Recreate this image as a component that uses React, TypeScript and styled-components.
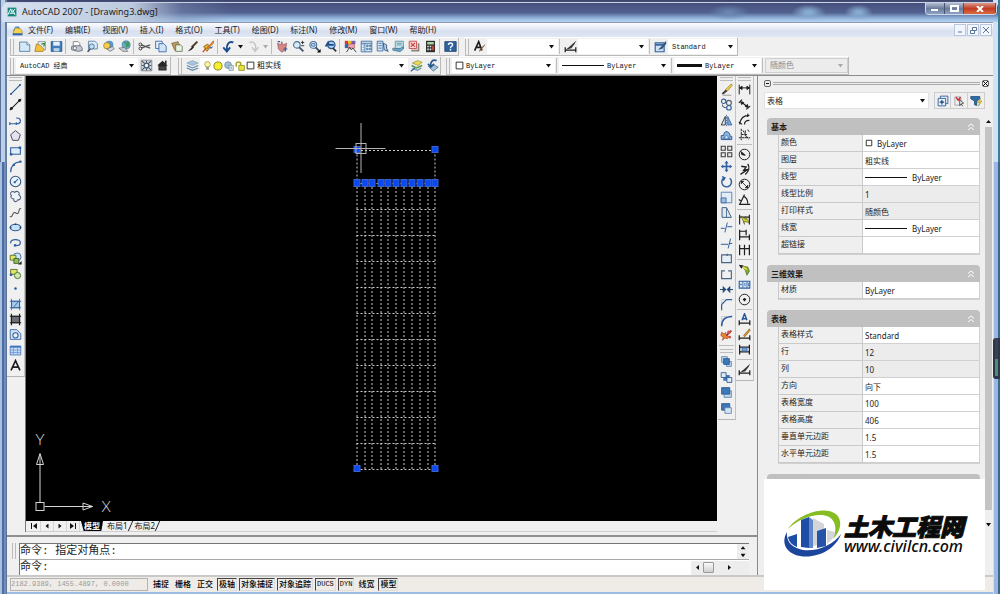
import React from "react";
import styled, { createGlobalStyle, css } from "styled-components";

const sans = `"Noto Sans", "Noto Sans CJK SC", sans-serif`;
const mono = `"Liberation Mono", "Noto Sans CJK SC", monospace`;

const GlobalStyle = createGlobalStyle`
  * { box-sizing: border-box; }
  html, body { margin: 0; height: 100%; }
  body { font-family: ${sans}; font-size: 8px; color: #1c1c1c; background: #8ea6cc; }
  #root { height: 100%; }
  button, input, select { font: inherit; color: inherit; margin: 0; padding: 0; border: 0; background: none; border-radius: 0; }
  button { cursor: pointer; }
  input:focus, select:focus, button:focus { outline: none; }
  ul { list-style: none; margin: 0; padding: 0; }
`;

/* ---------- icons ---------- */

const B = "#2f5f9e";
const K = "#1e1e1e";

const icons: Record<string, React.ReactNode> = {
  acad: (<><rect x="1" y="1" width="14" height="14" fill="#17857a" /><path d="M1 13L6 3l2 6 5-6M4 10h7M9 4l4 9" stroke="#e6fffa" strokeWidth="1.6" fill="none" /></>),
  doc: (<><path d="M1 9l4-7h5l2 4z" fill="#4d8fd6" /><path d="M2 10l3-6 7 1 3 5v4H2z" fill="#f7d34b" stroke="#7c6a2a" strokeWidth=".7" /><path d="M1 15h14v-3H1z" fill="#2e66b0" /></>),
  new: (<><path d="M2 2.500h9l3.500 3.500v8H2z" fill="#d4e8f8" stroke="#49749f" /><path d="M11 2.500V6h3.500" fill="#fff" stroke="#49749f" /></>),
  open: (<><path d="M5 2h9v10H5z" fill="#e9eef5" stroke="#69788a" strokeWidth=".8" /><path d="M1 14l2-9 4 1 6 6-2 2z" fill="#f3c13c" stroke="#8b6919" strokeWidth=".8" /><path d="M9 5l4-1-1 4" stroke="#2c8c3c" strokeWidth="1.500" fill="none" /></>),
  save: (<><path d="M1.500 2h13v12h-13z" fill="#3f7dbb" stroke="#234e80" /><path d="M4 2h8v5H4z" fill="#e8f1f9" /><path d="M4.500 10h7v4h-7z" fill="#b9d3ea" /></>),
  print: (<><path d="M4 8V2h6l2 2v4" fill="#fff" stroke="#666" strokeWidth=".9" /><path d="M2 8l4-1h7l2 3v3l-5 1-8-2z" fill="#c2c8d2" stroke="#4e5664" strokeWidth=".9" /><circle cx="6" cy="10" r="2" fill="#fff" stroke="#555" strokeWidth=".8" /></>),
  preview: (<><path d="M3 1.500h8l3 3V11H3z" fill="#dcecf9" stroke="#56799f" /><circle cx="7" cy="8" r="3.200" fill="#bfe0f4" stroke="#3f5e80" /><path d="M5 11l-3 3.500" stroke="#3a5066" strokeWidth="2" /></>),
  publish: (<><circle cx="9" cy="6" r="5" fill="#5a96cf" /><circle cx="6" cy="7" r="4" fill="#f5cf4c" stroke="#907020" strokeWidth=".8" /><path d="M6 11l7-3 2 3-5 3z" fill="#d5dae2" stroke="#555" strokeWidth=".8" /></>),
  globe: (<><circle cx="10" cy="6" r="5" fill="#69a9d3" stroke="#386d93" strokeWidth=".7" /><path d="M7 3c4 0 5 3 3 6M12 2l1 6" stroke="#3d9a55" strokeWidth="2" fill="none" /><path d="M1 10l7-1 4 5H6z" fill="#c8cdd4" stroke="#555" strokeWidth=".7" /></>),
  cut: (<><path d="M4 6l11 4M4 10l11-4" stroke="#555" strokeWidth="1.400" /><circle cx="3" cy="5.500" r="1.800" fill="none" stroke={K} /><circle cx="3" cy="10.500" r="1.800" fill="none" stroke={K} /></>),
  copy: (<><path d="M2 1.500h8v9H2z" fill="#e4f0fb" stroke={B} /><path d="M6 4.500h6l3 3v7H6z" fill="#cfe4f6" stroke={B} /></>),
  paste: (<><path d="M2 4l8-2 3 8-7 3z" fill="#b59a62" stroke="#6d5a34" strokeWidth=".8" /><path d="M7 6h6l2 2v6H7z" fill="#eaf3e2" stroke="#62734d" /></>),
  brush: (<><path d="M14 2L7 9" stroke="#4b3b2a" strokeWidth="2.400" /><path d="M8 8l-6 6 5-2 3-3z" fill="#252525" /></>),
  block: (<><path d="M2 8l5-3 3 4-4 5z" fill="#e6b530" stroke="#7f5f12" /><path d="M14 1L8 8l-2 1 1 2 7-7z" fill="#e8962e" stroke="#b04a20" strokeWidth=".8" /><path d="M1 15l4-5" stroke="#cf4428" strokeWidth="1.500" /><path d="M9 9l5-1-3 3z" fill="#3d6db0" /></>),
  undo: (<path d="M14 3C8 1 5 6 6 13M1.500 9L6 14l4-5" stroke="#1d4e8c" strokeWidth="2.400" fill="none" />),
  redo: (<path d="M3 3c6-2 9 3 7 10M6 9l4 5 4-5" stroke="#c3c6ca" strokeWidth="1.800" fill="none" />),
  pan: (<><path d="M2 4l4 2 1-4 2 4 4-2-1 8-5 3-4-4z" fill="#d88986" stroke="#8c4a55" strokeWidth=".8" /><path d="M9 11h5M11.500 9v5M2 2h3" stroke={B} strokeWidth="1.300" /></>),
  zoomrt: (<><circle cx="6" cy="6" r="4" fill="#d9ecf9" stroke="#4c6c8c" strokeWidth="1.300" /><path d="M9 9l5 5" stroke="#3f526a" strokeWidth="2.200" /><path d="M11 3h4M13 1v4M11 7h4" stroke={K} /></>),
  zoomwin: (<><circle cx="6.500" cy="6" r="4.200" fill="#d9ecf9" stroke="#4c6c8c" strokeWidth="1.300" /><path d="M9.500 9l4 4.500" stroke="#3f526a" strokeWidth="2.200" /><path d="M4.500 4.500h4v3h-4z" fill="none" stroke={B} /><path d="M15.500 11v4.500H11z" fill="#000" /></>),
  zoomprev: (<><circle cx="9" cy="6" r="4.500" fill="#a9cdec" stroke="#2c568c" strokeWidth="1.500" /><path d="M2 8l3-5 1 3h6" stroke="#1e4a86" strokeWidth="2" fill="none" /><path d="M11 10l4 4" stroke="#333" strokeWidth="2.200" /></>),
  props: (<><path d="M1 1h4v4H1z" fill="#d33" /><path d="M5 1h4v4H5z" fill="#e7c32b" /><path d="M1 5h4v5H1z" fill="#36a" /><path d="M9 1h5v4H9z" fill="#7a5bb5" /><path d="M5 5h8v5H5z" fill="#e9a6b4" stroke="#933" strokeWidth=".6" /><path d="M3 15l4-6 2 3 2-2 4 5" stroke={K} fill="none" /></>),
  dcenter: (<><path d="M1.500 1.500h13v13h-13z" fill="#e7f2fb" stroke={B} /><path d="M1.500 4h13M6 4v10" stroke={B} /><path d="M3 6h2M3 9h2M3 12h2M8 6h2v2H8zM11.500 6h2v2h-2zM8 10h2v2H8zM11.500 10h2v2h-2z" stroke="#3a6d9b" fill="#91bde0" strokeWidth=".8" /></>),
  palette: (<><path d="M1.500 1.500h7v12h-7z" fill="#dbe9f7" stroke={B} /><path d="M3 4h4M3 7h4M3 10h4" stroke={B} /><path d="M9 4l4 2v4l2 4-5-2z" fill="#b8cfe6" stroke="#244a78" /></>),
  sheet: (<><path d="M4 1.500h10v9H4z" fill="#bfe0e6" stroke="#4d7f97" strokeWidth=".9" /><path d="M6 4h6M6 6h6" stroke="#4d7f97" strokeWidth=".8" /><path d="M1 10l8 1 5-3v3l-4 3.500-9-2z" fill="#6fa7c9" stroke="#3b6b8c" strokeWidth=".8" /></>),
  markup: (<><path d="M1.500 1.500h9v9h-9z" fill="#f8d9d9" stroke="#c23a3a" /><path d="M3.500 3.500l5 5M8.500 3.500l-5 5" stroke="#d13a3a" strokeWidth="1.400" /><path d="M4 13h9V4" stroke="#8a7f7b" strokeWidth="2" fill="none" /></>),
  calc: (<><path d="M2.500 1h11v14h-11z" fill="#2c2c2c" /><path d="M4 2.500h8v3H4z" fill="#a7d9a3" /><path d="M4 7h2v2H4zM7 7h2v2H7zM4 10.500h2v2H4zM7 10.500h2v2H7z" fill="#ddd" /><path d="M10 7h2v5.500h-2z" fill="#d84b3c" /></>),
  help: (<><path d="M1 2h14v12H1z" fill="#2f639f" stroke="#1c406e" /><path d="M5.500 6c0-3 5-3 5 0 0 2-2.500 1.500-2.500 4M8 11v1.800" stroke="#fff" strokeWidth="1.700" fill="none" /></>),
  textstyle: (<><path d="M2 13L7 2l4 11M4 9h6" stroke={K} strokeWidth="2" fill="none" /><path d="M14.500 6L10 12l-2 2 1-3z" fill="#a97843" stroke="#553a1c" strokeWidth=".6" /></>),
  dimstyle: (<><path d="M1.500 9v6M14.500 9v6M2 12.500h12" stroke={K} strokeWidth="1.500" /><path d="M15 1l-2 4-4 5-7 2 5-4z" fill="#333" /></>),
  tablestyle: (<><path d="M1.500 3.500h11v11h-11z" fill="#cfe2f5" stroke={B} strokeWidth="1.400" /><path d="M1.500 6h11" stroke={B} strokeWidth="2" /><path d="M15 1L8 9l-3 3 5-1 5-6z" fill="#37597d" /></>),
  gear: (<><path d="M1.500 1.500h13v13h-13z" fill="#d8dde3" stroke="#777" /><circle cx="8" cy="8" r="3" fill="#eef2f6" stroke="#46586c" strokeWidth="1.600" /><path d="M2.500 2.500l3 3M13.500 2.500l-3 3M2.500 13.500l3-3M13.500 13.500l-3-3M8 2v2.500M8 11.500V14M2 8h2.500M11.500 8H14" stroke="#46586c" strokeWidth="1.400" /></>),
  home: (<><path d="M8 2L1.500 8H3v6h10V8h1.500z" fill="#262626" /><path d="M11 2h2v4h-2z" fill="#262626" /><path d="M4 10h8M4 12h8" stroke="#777" strokeWidth=".7" /></>),
  layers: (<><path d="M1 5l7-3 7 3-7 3z" fill="#a9c4dd" stroke="#6d8fb0" strokeWidth=".7" /><path d="M1 8l7 3 7-3M1 11l7 3 7-3" stroke="#5e84ab" strokeWidth="1.400" fill="none" /></>),
  bulb: (<><circle cx="8" cy="6" r="5" fill="#fdf6a4" stroke="#8f8440" strokeWidth="1.200" /><path d="M6 11h4v4H6z" fill="#9b9b9b" stroke="#666" strokeWidth=".6" /></>),
  sun: (<circle cx="8" cy="8" r="6.500" fill="#f5ee2e" stroke="#8a8220" strokeWidth="1.500" />),
  freeze: (<><circle cx="6.500" cy="6.500" r="5.500" fill="#9fbfd2" stroke="#5d7c90" /><path d="M8 7h7v8H8z" fill="#dce6ec" stroke="#6a8496" /><path d="M10 9l3 4M13 9l-3 4" stroke="#8aa" /></>),
  lock: (<><path d="M2 9V4c0-3 7-3 7 0v3" fill="none" stroke="#a9a41f" strokeWidth="2.400" /><path d="M6 7h9v8H6z" fill="#e8e23a" stroke="#8a8420" strokeWidth="1.200" /></>),
  swatch: (<path d="M2 2h12v12H2z" fill="#fff" stroke="#222" strokeWidth="1.600" />),
  layercur: (<><path d="M3 5l6-3 6 2-5 4z" fill="#e8dc55" stroke="#7b7626" strokeWidth=".7" /><path d="M2 8l6 3 7-3" stroke="#5a9a4b" strokeWidth="2" fill="none" /><path d="M3 11l6 3 5-3" stroke="#6b8fae" strokeWidth="1.500" fill="none" /><path d="M1 15l5-4" stroke={B} strokeWidth="1.500" /></>),
  layerprev: (<><path d="M3 9l6-2 6 3-6 5z" fill="#a9c3da" stroke="#45678a" strokeWidth=".9" /><path d="M13 2C8 0 5 4 6 9M2.500 6l3.500 4 4-4" stroke="#27588f" strokeWidth="2" fill="none" /></>),
  line: (<><path d="M2 14L14 2" stroke={B} strokeWidth="1.500" /><circle cx="2.500" cy="13.500" r="1.300" fill={B} /><circle cx="13.500" cy="2.500" r="1.300" fill={B} /></>),
  xline: (<><path d="M1 15L15 1" stroke={K} strokeWidth="1.300" /><circle cx="3" cy="13" r="1.800" /><circle cx="13" cy="3" r="1.800" /></>),
  pline: (<path d="M1 12h9c6 0 5-8-1-7M1 10v3.500M9 10v3.500" stroke={B} strokeWidth="1.500" fill="none" />),
  polygon: (<path d="M8 2l6 5-2.500 7h-7L2 7z" fill="#e4e4ee" stroke="#4c4c60" strokeWidth="1.200" />),
  rect: (<><path d="M2 4.500h12v8H2z" fill="#dcebf6" stroke={B} strokeWidth="1.300" /><path d="M1 11h3v3H1zM12 3h3v3h-3z" fill={B} /></>),
  arc: (<><path d="M2 15C2 8 6 3 14 2" stroke={B} strokeWidth="1.500" fill="none" /><circle cx="6" cy="6" r="1.500" fill={B} /><circle cx="14" cy="2" r="1.500" fill={B} /></>),
  circle: (<><circle cx="8" cy="8" r="6.500" fill="#eaf3fa" stroke="#35567c" strokeWidth="1.300" /><path d="M7 9l4-4" stroke={B} strokeWidth="1.400" /><circle cx="7" cy="9" r="1.400" fill={B} /></>),
  cloud: (<path d="M3 7c-3-3 1-7 4-4 3-3 7 0 5 3 4 2 2 7-1 6-2 4-6 2-5-1-4 0-4-3-3-4z" fill="#eef3f8" stroke="#4c5f7c" strokeWidth="1.300" />),
  spline: (<path d="M1 13c4 2 3-6 6-5s4 3 5-1 1-4 3-4" stroke="#555" strokeWidth="1.300" fill="none" />),
  ellipse: (<><ellipse cx="8" cy="8" rx="6.500" ry="4" fill="#c8e0f2" stroke={B} strokeWidth="1.500" /><path d="M7 3h2v2H7zM1 7h2v2H1zM13 7h2v2h-2z" fill="#1d4272" /></>),
  earc: (<><path d="M2 9C1 3 14 3 14 8c0 3-3 4-6 4" stroke={B} strokeWidth="1.500" fill="none" /><path d="M6 10h3v3H6z" fill={B} /></>),
  insert: (<><circle cx="10" cy="6" r="4.800" fill="#cfe4f5" stroke={B} /><path d="M1.500 4h7v6h-7z" fill="#dfe66b" stroke="#48651d" /><path d="M6 8h6v6H6z" fill="#8fbf5b" stroke="#35561c" /><path d="M15.500 11v4.500H11z" /></>),
  mkblock: (<><path d="M2 3h8v6H2z" fill="#e4e46b" stroke="#48651d" /><circle cx="10.500" cy="10.500" r="3.800" fill="#d4e8b4" stroke="#48752d" strokeWidth="1.200" /><path d="M1 8h3v3H1z" fill={B} /></>),
  point: (<circle cx="8" cy="8" r="1.600" fill={B} />),
  hatch: (<><path d="M3 4h10v8H3z" fill="#a4c8e8" stroke={B} /><path d="M3 1v14M13 1v14M1 4h14M1 12h14M6 11l5-6" stroke={B} /></>),
  gradient: (<><path d="M3 4h10v8H3z" fill="#6a7178" stroke={K} /><path d="M3 1v14M13 1v14M1 4h14M1 12h14" stroke={K} strokeWidth="1.500" /></>),
  region: (<><path d="M1.500 14V2h8l5 5v7z" fill="#cfe2f5" stroke={B} /><circle cx="8" cy="9" r="3.200" fill="#f0f0f0" stroke={B} strokeWidth="1.300" /></>),
  table: (<><path d="M1.500 2.500h13v11h-13z" fill="#c9dff5" stroke="#3e6fc0" /><path d="M1.500 3.500h13" stroke="#3e6fc0" strokeWidth="2" /><path d="M1.500 7.500h13M1.500 10.500h13M5.500 4v9M10.500 4v9" stroke="#6d96d6" /></>),
  mtext: (<path d="M2.500 14L8 2l5.500 12M4.500 10h7" stroke={K} strokeWidth="2" fill="none" />),
  erase: (<><path d="M14 1L7 8l2 2 6-7z" fill="#f2cf3f" stroke="#7f6717" strokeWidth=".7" /><path d="M7 8l-5 5 2 1 5-4z" fill="#414141" /><path d="M3 15h11" stroke="#888" /></>),
  copyobj: (<><circle cx="4.500" cy="4" r="2.700" fill="none" stroke={B} strokeWidth="1.400" /><circle cx="11" cy="6" r="3" fill="none" stroke="#53606f" strokeWidth="1.400" /><circle cx="11" cy="12" r="2.800" fill="none" stroke={B} strokeWidth="1.400" /><path d="M3 8c0 3 2 4 5 4" stroke="#53606f" strokeWidth="1.300" fill="none" /></>),
  mirror: (<><path d="M6.500 3v10.500h-5z" fill="#dfe6ec" stroke={K} /><path d="M9.500 3v10.500h5z" fill="#7ba7d3" stroke={B} /><path d="M8 1v14" stroke={B} strokeDasharray="2 1" /></>),
  offset: (<><path d="M1.500 13h13V9h-2c0-7-8-8-8-1h-3z" fill="#8ab5dd" stroke={B} strokeWidth="1.200" /><path d="M4 12v-1h2c0-4 4-4 4 0h2v1z" fill="#dbe9f6" stroke={B} strokeWidth=".8" /></>),
  array: (<path d="M1.500 1.500h5v5h-5zM9.500 1.500h5v5h-5zM1.500 9.500h5v5h-5zM9.500 9.500h5v5h-5z" fill="#e9e9e9" stroke="#3c3c3c" strokeWidth="1.300" />),
  move: (<path d="M8 1l2.500 3H9v3h3V5.500L15 8l-3 2.500V9H9v3h1.500L8 15l-2.500-3H7V9H4v1.500L1 8l3-2.500V7h3V4H5.500z" fill={B} />),
  rotate: (<path d="M5 3.500A6 6 0 1 0 12 4M2.500 2L6 3.500 4 7" stroke={B} strokeWidth="1.800" fill="none" />),
  scale: (<><path d="M1.500 1.500h13v13h-13z" fill="#e4edf6" stroke="#5c88b8" strokeWidth="1.200" /><path d="M1.500 8.500h6v6h-6z" fill="#9cc0e2" stroke={B} /></>),
  stretch: (<><path d="M2.500 14V2H8l6 12z" fill="#e0e6ec" stroke="#3f6286" strokeWidth="1.200" /><path d="M8 2v12" stroke="#3f6286" /></>),
  trim: (<path d="M1 9h5M9 7h6M9 2L6 14" stroke={B} strokeWidth="1.200" fill="none" />),
  extend: (<path d="M1 9h9M13 2l-3 12M11 8h4" stroke={B} strokeWidth="1.200" fill="none" />),
  breakpt: (<path d="M2 3.500h12v9.500H2zM9 2v3" stroke="#4a6684" strokeWidth="1.400" fill="#e6eef6" />),
  breakln: (<path d="M6 3.500H2v9.500h12V3.500h-4" stroke="#4a6684" strokeWidth="1.400" fill="none" />),
  join: (<path d="M0 8h6M10 8h6M4 5l3 3-3 3zM12 5L9 8l3 3z" stroke="#234b7a" fill="#234b7a" strokeWidth="1.300" />),
  chamfer: (<><path d="M2 15V8l6-6h7" stroke={B} strokeWidth="1.500" fill="none" /><path d="M2 8V2h6" stroke="#999" fill="none" strokeDasharray="1 1" /></>),
  fillet: (<><path d="M2 15c0-8 4-12 13-12" stroke={B} strokeWidth="1.700" fill="none" /><path d="M2 10V3h6" stroke="#999" fill="none" strokeDasharray="1 1" /></>),
  explode: (<><path d="M2 4l3 2 2-2 1 4 3 1-2 3-3-1-3 3 1-4-3-2z" fill="#e8842e" stroke="#b03a20" strokeWidth=".8" /><path d="M8 8l6-6" stroke="#7d2222" strokeWidth="1.800" /><circle cx="11" cy="4" r="2.300" fill="#d2524e" /><circle cx="12" cy="10" r="1.600" fill="#c9524e" /></>),
  front: (<><path d="M2 2h7v7H2zM8 8h6v6H8z" fill="#bfd5ea" stroke="#5c82aa" /><path d="M4.500 4.500h7v7h-7z" fill="#3d78b8" stroke="#24538a" /></>),
  back: (<><path d="M4 5h8v7H4z" fill="#3d78b8" /><path d="M1.500 2h6v6h-6zM8.500 8h6v6h-6z" fill="#dfeaf5" stroke="#24538a" /></>),
  above: (<><path d="M5 6h9v8H5z" fill="#bfd5ea" stroke="#5c82aa" /><path d="M2 2h10v8H2z" fill="#3d78b8" stroke="#24538a" /></>),
  under: (<><path d="M2 2h10v8H2z" fill="#3d78b8" stroke="#24538a" /><path d="M6 7h8v7H6z" fill="#d3e3f2" stroke="#5c82aa" /></>),
  dlin: (<path d="M1.500 2v12M14.500 2v12M2 6h12M2 6l3-2v4zM14 6l-3-2v4z" stroke={K} fill={K} strokeWidth="1.200" />),
  dalign: (<path d="M1 6l4-4M10 14l5-4M3 4l10 8M3.500 4.500l1 3 2-2zM12.500 11.500l-3-1 2-2z" stroke={K} fill={K} strokeWidth="1.400" />),
  darc: (<path d="M2 14C3 6 7 3 14 3M8 14c0-3 2-5 6-5M1 11l4 3M12 1v4" stroke={K} fill="none" strokeWidth="1.400" />),
  dord: (<path d="M4 1v14M1 12h14M4 8h8M9 3v9M12 2l2 3M6 3l7 11" stroke={K} fill="none" strokeDasharray="3 1" strokeWidth="1.200" />),
  drad: (<><circle cx="8" cy="8" r="6.500" fill="none" stroke={K} strokeWidth="1.200" /><path d="M9 9L4 5l1 3z" stroke={K} strokeWidth="1.300" /></>),
  djog: (<path d="M12 1c3 4 1 10-3 13M4 4l6 1-3 4 5-1-9 6" stroke={K} strokeWidth="1.600" fill="none" />),
  ddia: (<><circle cx="8" cy="8" r="6.500" fill="none" stroke={K} strokeWidth="1.200" /><path d="M4 4l8 8M4 4v3l3-3zM12 12V9l-3 3z" stroke={K} fill={K} /></>),
  dang: (<path d="M8 2l-6 12h13M7 4c4 2 5 5 5 9M1 8l3 2" stroke={K} strokeWidth="1.400" fill="none" />),
  dquick: (<><path d="M2 2v12M14 2v12M2 5h12" stroke={K} strokeWidth="1.400" /><path d="M4 4l6 4-1-4 5 8-7-2 1 4z" fill="#d8d52d" stroke="#4c5518" strokeWidth=".8" /></>),
  dbase: (<path d="M2 2v13M10 2v7M2 4h8M2 11h12M14 8v7" stroke={K} strokeWidth="1.500" fill="none" />),
  dcont: (<path d="M2 2v13M8 2v13M14 2v13M2 7h12" stroke={K} strokeWidth="1.500" fill="none" />),
  leader: (<><path d="M1 2l6 1-3 4z" /><path d="M5 4l7 1 2 5-3 5-2-6z" fill="#7fae35" stroke="#3d5c14" strokeWidth=".8" /><path d="M6 5l5 3" stroke="#ecd730" strokeWidth="2" /></>),
  tol: (<><path d="M1.500 4h13v8.500h-13z" fill="#dbe9f7" stroke={B} strokeWidth="1.400" /><path d="M6 4v8M11 4v8" stroke={B} /><circle cx="3.700" cy="8" r="1" fill={B} /><path d="M8.500 6v4M12.800 6v4" stroke={B} fill="none" /></>),
  center: (<><circle cx="8" cy="8" r="6.500" fill="none" stroke={K} strokeWidth="1.200" /><path d="M8 6v4M6 8h4" stroke={K} strokeWidth="1.600" /></>),
  dedit: (<><path d="M5 9l3-8 3 8M6 7h4" stroke="#23579b" strokeWidth="1.800" fill="none" /><path d="M1.500 9v6M14.500 9v6M2 12.500h12" stroke={K} strokeWidth="1.500" /></>),
  dtedit: (<><path d="M14 1L7 9l1 2 7-8z" fill="#e3a338" stroke="#7f4c12" strokeWidth=".8" /><path d="M1.500 9v6M14.500 9v6M2 12.500h12" stroke={K} strokeWidth="1.500" /></>),
  dupdate: (<><path d="M2 2v12M14 2v12M2 5h12M2 11h12" stroke={K} strokeWidth="1.500" /><path d="M5 6h6v4H5z" fill="#7da9d6" stroke={B} /></>),
  pickadd: (<><path d="M4.500 1.500h10v10h-10z" fill="#e8f1fa" stroke={B} strokeWidth="1.200" /><path d="M1.500 4.500h10v10h-10z" fill="#e8f1fa" stroke={B} strokeWidth="1.200" /><path d="M6.500 6.500v6M3.500 9.500h6" stroke="#1e3f70" strokeWidth="1.600" /></>),
  selobj: (<><path d="M2.500 13.500V2.500h8v11z" fill="none" stroke="#8b97a8" /><path d="M4 3l3 4 3-4" stroke="#d2343c" strokeWidth="2" fill="none" /><path d="M9 6v8l2-2 2 3M9 6l5 5h-3" stroke={K} fill="#fff" /></>),
  filter: (<><path d="M1 2h12v3L9 8v6l-3-1V8L1 5z" fill="#2d6ba9" stroke="#1c4776" /><path d="M14 4l-4 6h3l-2 5 5-7h-3z" fill="#f5d630" stroke="#8f7a12" strokeWidth=".6" /></>),
  colorbox: (<path d="M2.500 2.500h11v11h-11z" fill="#fff" stroke="#222" strokeWidth="1.800" />),
};

const Svg = styled.svg<{ $s: number }>`
  display: block;
  flex: none;
  width: ${(p) => p.$s}px;
  height: ${(p) => p.$s}px;
`;

const Icon = ({ name, size = 13 }: { name: string; size?: number }) => (
  <Svg $s={size} viewBox="0 0 16 16" fill="#1e1e1e" aria-hidden="true">{icons[name]}</Svg>
);

const Arrow = styled.span<{ $dir?: "up" | "down" | "left" | "right"; $c?: string }>`
  flex: none;
  width: 5px;
  height: 5px;
  background: ${(p) => p.$c || "#111"};
  pointer-events: none;
  clip-path: ${(p) =>
    p.$dir === "up" ? "polygon(0 80%, 50% 20%, 100% 80%)"
    : p.$dir === "left" ? "polygon(80% 0, 20% 50%, 80% 100%)"
    : p.$dir === "right" ? "polygon(20% 0, 80% 50%, 20% 100%)"
    : "polygon(0 20%, 100% 20%, 50% 90%)"};
`;

/* ---------- window frame ---------- */

const Frame = styled.div`
  position: relative;
  display: flex;
  flex-direction: column;
  min-height: 100%;
  padding: 2px 7px 2px 7px;
  background:
    linear-gradient(90deg, #5d6f96 0 1px, #b9d0ec 1px 5px, #6c7f9f 5px 7px, transparent 7px) 0 0 / 7px 162px no-repeat,
    linear-gradient(90deg, #a9bfdf 0 2px, #4e6da0 2px 4px, #6f8cc0 4px 6px, #5c7396 6px) 0 162px / 7px 100% no-repeat,
    linear-gradient(90deg, #cfe2f8 0 5px, #3f7d94 5px) 100% 0 / 7px 162px no-repeat,
    linear-gradient(90deg, #d0e0f4 0 1px, #9ab6e4 1px 5px, #3c6a84 5px) 100% 162px / 7px 100% no-repeat,
    linear-gradient(#3d446c, #b3cdea 22px, #9dbce4 100%);
`;

const TitleBar = styled.header`
  display: flex;
  align-items: flex-start;
  height: 20px;
  margin: 0 -5px;
  padding: 0 1px 0 5px;
  border-top: 1px solid #c7d2e6;
  border-radius: 5px 5px 0 0;
  background:
    radial-gradient(ellipse 17px 8px at 81% 50%, #86abcf 20%, transparent),
    radial-gradient(ellipse 14px 8px at 86% 50%, #86abcf 20%, transparent),
    radial-gradient(ellipse 20px 8px at 73% 50%, #6b8ab3, transparent),
    linear-gradient(90deg, #d7e2f0 0, #bccadf 130px, #7f91b566 180px, transparent 230px),
    linear-gradient(#47507d, #51618f 50%, #93b4dc 80%, #b7d3f0);
`;

const Title = styled.h1`
  display: flex;
  align-items: center;
  gap: 5px;
  flex: 1;
  height: 18px;
  margin: 0;
  font-size: 9px;
  font-weight: 400;
  line-height: 12px;
`;

const CaptionButtons = styled.div`
  display: flex;
  height: 12px;
  border: 1px solid #cdd8ea;
  border-top: 0;
  border-radius: 0 0 4px 4px;
  overflow: hidden;
`;

const CaptionButton = styled.button<{ $close?: boolean }>`
  display: grid;
  place-items: center;
  width: ${(p) => (p.$close ? 32 : 19)}px;
  border-right: 1px solid #47536f;
  background: ${(p) => (p.$close ? "linear-gradient(#d99a8c, #c23c24 50%, #d96a3f)" : "linear-gradient(#b3bfd3, #6b7c9c 50%, #8ea2c3)")};
`;

const MenuBar = styled.nav`
  display: flex;
  align-items: center;
  height: 15px;
  padding: 0 1px 0 5px;
  border-top: 1px solid #8b9ab4;
  background: linear-gradient(#fdfdff, #d8e0f0 60%, #dfe6f4);
`;

const MenuList = styled.ul`
  display: flex;
  flex: 1;
  gap: 12px;
  padding-left: 5px;
`;

const MenuItem = styled.button`
  line-height: 12px;
  white-space: nowrap;
`;

const MdiButton = styled.button`
  display: grid;
  place-items: center;
  width: 12px;
  height: 12px;
  margin-left: 1px;
  border: 1px solid #b9c6db;
  background: #f1f6fd;
`;

/* ---------- toolbars ---------- */

const ToolRow = styled.div`
  display: flex;
  height: 19px;
  padding-left: 2px;
  background: #f0f0f0;
`;

const ToolBar = styled.div<{ $gap?: number }>`
  display: flex;
  align-items: center;
  height: 18px;
  margin-right: ${(p) => p.$gap ?? 6}px;
  border: solid #fff;
  border-width: 1px 0 0 0;
  box-shadow: 1px 1px 0 #b9b9b9;
`;

const Grip = styled.span<{ $h?: boolean }>`
  flex: none;
  ${(p) => p.$h
    ? css`width: 13px; height: 4px; margin: 1px auto; border-top: 1px solid #bbb; border-bottom: 1px solid #bbb;`
    : css`width: 4px; height: 16px; margin: 0 2px 0 1px; border-left: 1px solid #bbb; border-right: 1px solid #bbb;`}
`;

const ToolButton = styled.button<{ $w?: number }>`
  display: grid;
  place-items: center;
  flex: none;
  width: ${(p) => p.$w || 16}px;
  height: 15px;
`;

const Divider = styled.span<{ $h?: boolean }>`
  flex: none;
  ${(p) => p.$h
    ? css`width: 15px; height: 1px; margin: 2px auto; background: #bdbdbd;`
    : css`width: 1px; height: 15px; margin: 0 2px 0 1px; background: #bdbdbd;`}
`;

const Combo = styled.div<{ $w: number; $off?: boolean }>`
  display: flex;
  align-items: center;
  gap: 1px;
  width: ${(p) => p.$w}px;
  height: 15px;
  padding: 0 4px 0 3px;
  font-family: ${mono};
  background: ${(p) => (p.$off ? "#ececec" : "#fff")};
  border: ${(p) => (p.$off ? "1px solid #cfcfcf" : "0")};
  color: ${(p) => (p.$off ? "#8d8d8d" : "#151515")};
`;

const Pick = styled.select<{ $size: number }>`
  flex: 1;
  min-width: 0;
  height: 13px;
  padding-left: 1px;
  appearance: none;
  font-size: ${(p) => p.$size}px;
  opacity: 1;
`;

const Rule = styled.span<{ $w: number; $t?: number }>`
  flex: none;
  width: ${(p) => p.$w}px;
  height: ${(p) => p.$t || 1}px;
  margin-right: 1px;
  background: #111;
`;

interface SelectProps {
  label: string;
  value: string;
  width: number;
  size?: number;
  disabled?: boolean;
  children?: React.ReactNode;
}

const SelectBox = ({ label, value, width, size = 7, disabled, children }: SelectProps) => (
  <Combo $w={width} $off={disabled}>
    {children}
    <Pick aria-label={label} $size={size} disabled={disabled} defaultValue={value}>
      <option value={value}>{value}</option>
    </Pick>
    <Arrow $c={disabled ? "#aaa" : undefined} />
  </Combo>
);

const Tools = ({ items }: { items: [string, string][] }) => (
  <>
    {items.map(([icon, label]) => (
      <ToolButton key={icon} title={label} aria-label={label}><Icon name={icon} /></ToolButton>
    ))}
  </>
);

/* ---------- work area ---------- */

const Main = styled.main`
  display: flex;
  flex: 1;
  border-top: 1px solid #8c8c8c;
  background: #f0f0f0;
`;

const Left = styled.div`
  display: flex;
  flex-direction: column;
  flex: 1;
  min-width: 0;
  border-right: 1px solid #8a8a8a;
`;

const Work = styled.div`
  display: flex;
  flex: 1;
  align-items: flex-start;
  padding-right: 3px;
  border-bottom: 2px solid #8f8f8f;
`;

const SideBar = styled.div`
  display: flex;
  flex-direction: column;
  width: 18px;
  padding-bottom: 3px;
  border-right: 1px solid #c2c2c2;
  border-bottom: 1px solid #b5b5b5;
`;

const Stack = styled.div<{ $h: number }>`
  display: flex;
  flex-direction: column;
  align-items: center;
  justify-content: space-between;
  height: ${(p) => p.$h}px;
`;

const CanvasColumn = styled.div`
  display: flex;
  flex-direction: column;
  align-self: stretch;
  flex: 1;
  min-width: 0;
  margin: 0 1px 3px 0;
  border-left: 1px solid #777;
`;

const Canvas = styled.div`
  flex: 1;
  min-height: 0;
  background: #000;
  overflow: hidden;
`;

const Drawing = styled.svg`
  display: block;
  width: 100%;
  height: 444px;
`;

const TabStrip = styled.div`
  display: flex;
  align-items: center;
  height: 11px;
  padding-left: 2px;
  border-bottom: 1px solid #cfcfcf;
`;

const NavButton = styled.button`
  display: grid;
  place-items: center;
  width: 13px;
  height: 10px;
  border-right: 1px solid #d4d4d4;
`;

const LayoutTab = styled.button<{ $on?: boolean }>`
  position: relative;
  height: 10px;
  margin-left: 1px;
  padding: 0 3px;
  font-size: 8px;
  line-height: 10px;
  font-weight: ${(p) => (p.$on ? 700 : 400)};
  color: ${(p) => (p.$on ? "#fff" : "#111")};
  white-space: nowrap;
  background: ${(p) => (p.$on ? "#000" : "transparent")};
  clip-path: ${(p) => (p.$on ? "polygon(0 0, 100% 0, 92% 100%, 12% 100%)" : "none")};
  &::after {
    content: "";
    position: absolute;
    right: 0;
    top: 0;
    width: 1px;
    height: 10px;
    background: #222;
    transform: skewX(-24deg);
  }
`;

/* ---------- command window ---------- */

const CommandDock = styled.section`
  display: flex;
  height: 38px;
  padding: 6px 8px 0 4px;
`;

const CommandBox = styled.div`
  display: flex;
  flex-direction: column;
  flex: 1;
  margin-left: 1px;
  border-top: 1px solid #777;
  border-left: 1px solid #777;
  background: #fff;
  font-family: ${mono};
  font-size: 11px;
`;

const CommandLine = styled.div<{ $log?: boolean }>`
  display: flex;
  height: 16px;
  align-items: center;
  line-height: 15px;
  ${(p) => p.$log && css`border-bottom: 1px solid #aaa;`}
`;

const CommandText = styled.output`
  flex: 1;
`;

const CommandInput = styled.input`
  flex: 1;
  min-width: 0;
  height: 12px;
`;

const ScrollV = styled.div`
  display: flex;
  flex-direction: column;
  align-items: center;
  justify-content: space-around;
  width: 12px;
  height: 15px;
  background: #ededed;
`;

const ScrollH = styled.div`
  display: flex;
  align-items: center;
  justify-content: space-between;
  width: 58px;
  height: 14px;
  padding: 0 17px 0 4px;
  background: #ededed;
`;

const Thumb = styled.span`
  width: 11px;
  height: 11px;
  margin-right: 10px;
  border: 1px solid #999;
  border-radius: 1px;
  background: linear-gradient(#fafafa, #cfcfcf);
`;

/* ---------- status bar ---------- */

const StatusBar = styled.footer`
  display: flex;
  align-items: center;
  height: 17px;
  padding: 1px 3px;
  border-top: 2px solid #c9c9c9;
  background: #efece8;
  font-family: ${mono};
`;

const Coords = styled.output`
  width: 138px;
  height: 13px;
  margin-right: 1px;
  border: 1px solid #b3b3b3;
  font-size: 7px;
  line-height: 11px;
  color: #9a9a9a;
  white-space: nowrap;
`;

const Toggle = styled.button<{ $on?: boolean; $latin?: boolean }>`
  height: 13px;
  padding: 0 1px;
  margin-left: 2px;
  border: 1px solid ${(p) => (p.$on ? "#ddd" : "transparent")};
  ${(p) => p.$on && css`border-top-color: #444; border-left-color: #444;`}
  font-size: ${(p) => (p.$latin ? 7 : 8)}px;
  font-weight: 500;
  line-height: 11px;
  color: #000;
`;

/* ---------- properties palette ---------- */

const Palette = styled.aside`
  display: flex;
  flex-direction: column;
  width: 235px;
  padding: 4px 0 0 6px;
  background: #efefef;
`;

const PaletteTop = styled.div`
  display: flex;
  align-items: center;
  gap: 2px;
  height: 7px;
  padding-right: 4px;
`;

const PaletteGrip = styled.span`
  flex: 1;
  height: 3px;
  border-top: 1px solid #aaa;
  border-bottom: 1px solid #aaa;
`;

const TinyButton = styled.button`
  display: grid;
  place-items: center;
  width: 7px;
  height: 7px;
  border: 1px solid #666;
  border-radius: 2px;
`;

const PalettePick = styled.div`
  display: flex;
  align-items: center;
  margin: 5px 8px 9px 0;
`;

const ObjectSelect = styled.div`
  display: flex;
  align-items: center;
  flex: 1;
  height: 17px;
  margin-right: 5px;
  padding: 0 3px 0 1px;
  background: #fff;
  border: 1px solid #e2e2e2;
`;

const BoxButton = styled.button`
  display: grid;
  place-items: center;
  width: 17px;
  height: 17px;
  border: 1px solid #cdcdcd;
  border-left-width: 0;
  &:first-of-type { border-left-width: 1px; }
`;

const PaletteBody = styled.div`
  display: flex;
  flex: 1;
`;

const Sections = styled.div`
  flex: 1;
  padding: 0 5px 0 3px;
`;

const Section = styled.section`
  margin-bottom: 10px;
`;

const SectionHead = styled.h2`
  display: flex;
  align-items: center;
  justify-content: space-between;
  height: 17px;
  margin: 0;
  padding: 0 5px 0 4px;
  border-radius: 4px 4px 0 0;
  background: #c0c0c0;
  font-size: 8px;
  font-weight: 700;
  line-height: 12px;
`;

const Grid = styled.table`
  width: 202px;
  margin-left: 11px;
  border-collapse: separate;
  border-spacing: 0;
  table-layout: fixed;
  border-bottom: 1px solid #d0d0d0;
`;

const NameCell = styled.th`
  width: 85px;
  height: 17px;
  padding: 0 0 2px 2px;
  border: solid #cacaca;
  border-width: 0 1px 1px 1px;
  text-align: left;
  font-weight: 400;
  line-height: 12px;
`;

const ValueCell = styled.td<{ $ro?: boolean }>`
  height: 17px;
  padding: 0 0 0 2px;
  border: solid #d0d0d0;
  border-width: 0 1px 1px 0;
  background: ${(p) => (p.$ro ? "#ececec" : "#fff")};
`;

const ValueFlow = styled.div`
  display: flex;
  align-items: center;
  gap: 4px;
`;

const ValueInput = styled.input`
  flex: 1;
  min-width: 0;
  height: 12px;
`;

const ScrollTrack = styled.div`
  display: flex;
  flex-direction: column;
  align-items: center;
  gap: 3px;
  width: 7px;
  margin-right: 1px;
  padding: 1px 0 48px;
`;

const ScrollThumb = styled.span`
  flex: 1;
  width: 7px;
  margin-bottom: 9px;
  background: #c4c4c4;
`;

/* ---------- floating overlays ---------- */

const Watermark = styled.div`
  position: absolute;
  right: 15px;
  bottom: 4px;
  display: flex;
  align-items: center;
  gap: 1px;
  width: 221px;
  height: 111px;
  padding: 0 0 1px 19px;
  background: #fff;
`;

const WatermarkText = styled.div`
  display: flex;
  flex-direction: column;
  color: #0b0b0b;
  font-style: italic;
  white-space: nowrap;
`;

const SiteName = styled.strong`
  font-family: "Noto Sans CJK SC", sans-serif;
  font-size: 24px;
  font-weight: 900;
  line-height: 24px;
  -webkit-text-stroke: 1px #0b0b0b;
`;

const SiteLink = styled.a`
  color: #0b0b0b;
  font-size: 16px;
  font-weight: 500;
  line-height: 16px;
  text-decoration: none;
`;

const SideWidget = styled.div`
  position: absolute;
  right: 0;
  top: 338px;
  width: 7px;
  height: 41px;
  border-radius: 3px 0 0 3px;
  background: linear-gradient(90deg, #2f3548 2px, transparent 2px 5px, #2f3548 5px), linear-gradient(#394158 0 50%, #4f8b76 50% 92%, #2f3548 92%);
`;

/* ---------- data ---------- */

const menus = ["文件(F)", "编辑(E)", "视图(V)", "插入(I)", "格式(O)", "工具(T)", "绘图(D)", "标注(N)", "修改(M)", "窗口(W)", "帮助(H)"];

const drawTools: [string, string][] = [
  ["line", "直线"], ["xline", "构造线"], ["pline", "多段线"], ["polygon", "正多边形"], ["rect", "矩形"], ["arc", "圆弧"],
  ["circle", "圆"], ["cloud", "修订云线"], ["spline", "样条曲线"], ["ellipse", "椭圆"], ["earc", "椭圆弧"], ["insert", "插入块"],
  ["mkblock", "创建块"], ["point", "点"], ["hatch", "图案填充"], ["gradient", "渐变色"], ["region", "面域"], ["table", "表格"], ["mtext", "多行文字"],
];

const modifyTools: [string, string][] = [
  ["erase", "删除"], ["copyobj", "复制"], ["mirror", "镜像"], ["offset", "偏移"], ["array", "阵列"], ["move", "移动"],
  ["rotate", "旋转"], ["scale", "缩放"], ["stretch", "拉伸"], ["trim", "修剪"], ["extend", "延伸"], ["breakpt", "打断于点"],
  ["breakln", "打断"], ["join", "合并"], ["chamfer", "倒角"], ["fillet", "圆角"], ["explode", "分解"],
];

const orderTools: [string, string][] = [["front", "前置"], ["back", "后置"], ["above", "置于对象之上"], ["under", "置于对象之下"]];

const dimTools: [string, string][][] = [
  [["dlin", "线性"], ["dalign", "对齐"], ["darc", "弧长"], ["dord", "坐标"]],
  [["drad", "半径"], ["djog", "折弯"], ["ddia", "直径"], ["dang", "角度"]],
  [["dquick", "快速标注"], ["dbase", "基线"], ["dcont", "连续"]],
  [["leader", "快速引线"], ["tol", "公差"], ["center", "圆心标记"]],
  [["dedit", "编辑标注"], ["dtedit", "编辑标注文字"], ["dupdate", "标注更新"]],
  [["dimstyle", "标注样式"]],
];

interface Prop { name: string; value: string; ro?: boolean; mark?: "box" | "line"; }

const sections: { title: string; rows: Prop[] }[] = [
  { title: "基本", rows: [
    { name: "颜色", value: "ByLayer", mark: "box" },
    { name: "图层", value: "粗实线" },
    { name: "线型", value: "ByLayer", mark: "line" },
    { name: "线型比例", value: "1", ro: true },
    { name: "打印样式", value: "随颜色", ro: true },
    { name: "线宽", value: "ByLayer", mark: "line" },
    { name: "超链接", value: "" },
  ] },
  { title: "三维效果", rows: [{ name: "材质", value: "ByLayer" }] },
  { title: "表格", rows: [
    { name: "表格样式", value: "Standard" },
    { name: "行", value: "12", ro: true },
    { name: "列", value: "10", ro: true },
    { name: "方向", value: "向下" },
    { name: "表格宽度", value: "100" },
    { name: "表格高度", value: "406" },
    { name: "垂直单元边距", value: "1.5" },
    { name: "水平单元边距", value: "1.5" },
  ] },
  { title: "几何图形", rows: [] },
];

const toggles: [string, boolean][] = [
  ["捕捉", false], ["栅格", false], ["正交", false], ["极轴", true], ["对象捕捉", true],
  ["对象追踪", true], ["DUCS", true], ["DYN", true], ["线宽", false], ["模型", true],
];

const colX = [330.5, 338.5, 345.5, 354.5, 361.5, 369.5, 377.5, 385.5, 393.5, 401.5, 408.5];
const rowY = [107.5, 133.5, 159.5, 185.5, 211.5, 237.5, 263.5, 289.5, 315.5, 341.5, 367.5, 393.5];

/* ---------- parts ---------- */

const CadDrawing = () => (
  <Drawing viewBox="0 0 690 444" preserveAspectRatio="xMidYMid meet" role="img" aria-label="模型空间">
    <g stroke="#c8c8c8" strokeWidth="1" strokeDasharray="2 2" fill="none">
      <path d="M330.500 74.500H408.500M330.500 74.500V107M408.500 74.500V107" />
      {colX.map((x) => <path key={x} d={`M${x} 107V393`} />)}
      {rowY.map((y) => <path key={y} d={`M330 ${y}H409`} />)}
    </g>
    <g fill="#0a48f5" stroke="#3a62c8" strokeWidth="1">
      {colX.map((x) => <rect key={x} x={x - 3} y="103.500" width="6" height="7" />)}
      <rect x="327.500" y="70.500" width="6" height="6" />
      <rect x="405.500" y="70.500" width="6" height="6" />
      <rect x="327.500" y="389.500" width="6" height="6" />
      <rect x="405.500" y="389.500" width="6" height="6" />
    </g>
    <g stroke="#b4b4b4" fill="none">
      <path d="M309 72.500H359M334.500 47V97" />
      <rect x="329.500" y="67.500" width="10" height="10" />
    </g>
    <g stroke="#d5d5d5" fill="none">
      <rect x="9.500" y="426.500" width="8" height="8" />
      <path d="M13.500 426V378M18 430.500H66M13.500 377.500L10 388.500h7zM66 430.500L56.500 427v7z" />
    </g>
    <g fill="#e0e0e0" fontFamily="Lato, sans-serif" fontWeight="300" fontSize="15">
      <text x="9" y="369">Y</text>
      <text x="75" y="436">X</text>
    </g>
  </Drawing>
);

const Chevrons = () => (
  <Svg $s={8} viewBox="0 0 8 8" aria-hidden="true">
    <path d="M1 3.500L4 1l3 2.500M1 7l3-2.500L7 7" stroke="#fff" fill="none" />
  </Svg>
);

const CivilLogo = () => (
  <svg width="60" height="48" viewBox="0 0 60 48" aria-hidden="true">
    <path d="M5 19C14 5 42-6 54 5c6 7 3 17-4 24C54 19 53 11 46 7 36 2 18 7 5 19z" fill="#86bd22" />
    <path d="M4 22C-2 32 2 43 17 46c17 3 36-7 41-22-8 11-24 18-38 16C9 38 3 32 4 22z" fill="#1c459c" />
    <path d="M5 27l9-3v13c-5-2-8-5-9-10z" fill="#1d4da6" />
    <path d="M18 10l8-3v31l-8-1z" fill="#1d4da6" />
    <path d="M26 7l4 3v28h-4z" fill="#5f86c6" />
    <path d="M30 8l11 6v7l-7 4v10l-4 1z" fill="#d3d5d9" />
    <path d="M34 21l9-3v18l-9 2z" fill="#2453a8" />
    <path d="M44 20l8 2c0 4-3 8-8 12z" fill="#d3d5d9" />
  </svg>
);

const PropertyRow = ({ p }: { p: Prop }) => (
  <tr>
    <NameCell scope="row">{p.name}</NameCell>
    <ValueCell $ro={p.ro}>
      <ValueFlow>
        {p.mark === "box" && <Icon name="colorbox" size={8} />}
        {p.mark === "line" && <Rule $w={42} />}
        <ValueInput aria-label={p.name} defaultValue={p.value} readOnly={p.ro} />
      </ValueFlow>
    </ValueCell>
  </tr>
);

export default function App() {
  return (
    <>
      <GlobalStyle />
      <Frame>
        <TitleBar>
          <Title><Icon name="acad" size={10} />AutoCAD 2007 - [Drawing3.dwg]</Title>
          <CaptionButtons>
            <CaptionButton aria-label="最小化"><svg width="8" height="6"><path d="M0 4h7" stroke="#fff" strokeWidth="2" /></svg></CaptionButton>
            <CaptionButton aria-label="最大化"><svg width="9" height="7"><path d="M1 1h7v5H1z" fill="none" stroke="#fff" strokeWidth="2" /></svg></CaptionButton>
            <CaptionButton $close aria-label="关闭"><svg width="8" height="6"><path d="M1 0l6 6M7 0L1 6" stroke="#fff" strokeWidth="2" /></svg></CaptionButton>
          </CaptionButtons>
        </TitleBar>
        <MenuBar>
          <Icon name="doc" size={11} />
          <MenuList>
            {menus.map((m) => <li key={m}><MenuItem>{m}</MenuItem></li>)}
          </MenuList>
          <MdiButton aria-label="最小化文档"><svg width="6" height="6"><path d="M1 5h4" stroke="#5b7598" /></svg></MdiButton>
          <MdiButton aria-label="还原文档"><svg width="7" height="7"><path d="M2.500 .5h4v3h-4zM.5 3.500h4v3h-4z" fill="#fff" stroke="#5b7598" /></svg></MdiButton>
          <MdiButton aria-label="关闭文档"><svg width="6" height="6"><path d="M0 0l6 6M6 0L0 6" stroke="#5b7598" strokeWidth="1" /></svg></MdiButton>
        </MenuBar>

        <ToolRow>
          <ToolBar>
            <Grip />
            <Tools items={[["new", "新建"], ["open", "打开"], ["save", "保存"]]} />
            <Divider />
            <Tools items={[["print", "打印"], ["preview", "打印预览"], ["publish", "发布"], ["globe", "三维 DWF"]]} />
            <Divider />
            <Tools items={[["cut", "剪切"], ["copy", "复制"], ["paste", "粘贴"], ["brush", "特性匹配"], ["block", "块编辑器"]]} />
            <Divider />
            <Tools items={[["undo", "放弃"]]} />
            <ToolButton $w={9} aria-label="放弃列表"><Arrow /></ToolButton>
            <Tools items={[["redo", "重做"]]} />
            <ToolButton $w={9} aria-label="重做列表"><Arrow $c="#aaa" /></ToolButton>
            <Divider />
            <Tools items={[["pan", "实时平移"], ["zoomrt", "实时缩放"], ["zoomwin", "窗口缩放"], ["zoomprev", "缩放上一个"]]} />
            <Divider />
            <Tools items={[["props", "特性"], ["dcenter", "设计中心"], ["palette", "工具选项板"], ["sheet", "图纸集管理器"], ["markup", "标记集管理器"], ["calc", "快速计算器"]]} />
            <Divider />
            <Tools items={[["help", "帮助"]]} />
          </ToolBar>
          <ToolBar>
            <Grip />
            <Tools items={[["textstyle", "文字样式"]]} />
            <SelectBox label="文字样式" value="" width={71} />
            <Divider />
            <Tools items={[["dimstyle", "标注样式"]]} />
            <SelectBox label="标注样式" value="" width={70} />
            <Divider />
            <Tools items={[["tablestyle", "表格样式"]]} />
            <SelectBox label="表格样式" value="Standard" width={69} />
          </ToolBar>
        </ToolRow>
        <ToolRow>
          <ToolBar $gap={7}>
            <Grip />
            <SelectBox label="工作空间" value="AutoCAD 经典" width={122} />
            <Tools items={[["gear", "工作空间设置"], ["home", "我的工作空间"]]} />
          </ToolBar>
          <ToolBar $gap={5}>
            <Grip />
            <Tools items={[["layers", "图层特性管理器"]]} />
            <SelectBox label="图层" value="粗实线" width={208} size={8}>
              <Icon name="bulb" size={9} />
              <Icon name="sun" size={10} />
              <Icon name="freeze" size={10} />
              <Icon name="lock" size={10} />
              <Icon name="swatch" size={9} />
            </SelectBox>
            <Tools items={[["layercur", "将对象的图层置为当前"], ["layerprev", "上一个图层"]]} />
          </ToolBar>
          <ToolBar>
            <Grip />
            <SelectBox label="颜色控制" value="ByLayer" width={103}><Icon name="swatch" size={9} /></SelectBox>
            <Divider />
            <SelectBox label="线型控制" value="ByLayer" width={111}><Rule $w={42} /></SelectBox>
            <Divider />
            <SelectBox label="线宽控制" value="ByLayer" width={87}><Rule $w={25} $t={3} /></SelectBox>
            <Divider />
            <SelectBox label="打印样式控制" value="随颜色" width={83} size={8} disabled />
          </ToolBar>
        </ToolRow>

        <Main>
          <Left>
            <Work>
              <SideBar>
                <Grip $h />
                <Stack $h={291}><Tools items={drawTools} /></Stack>
              </SideBar>
              <CanvasColumn>
                <Canvas><CadDrawing /></Canvas>
                <TabStrip>
                  <NavButton aria-label="第一个布局"><svg width="8" height="8"><path d="M1.500 1v6" stroke="#111" /><path d="M7 1v6L3 4z" fill="#111" /></svg></NavButton>
                  <NavButton aria-label="上一个布局"><Arrow $dir="left" /></NavButton>
                  <NavButton aria-label="下一个布局"><Arrow $dir="right" /></NavButton>
                  <NavButton aria-label="最后一个布局"><svg width="8" height="8"><path d="M6.500 1v6" stroke="#111" /><path d="M1 1v6l4-3z" fill="#111" /></svg></NavButton>
                  <LayoutTab $on>模型</LayoutTab>
                  <LayoutTab>布局1</LayoutTab>
                  <LayoutTab>布局2</LayoutTab>
                </TabStrip>
              </CanvasColumn>
              <SideBar>
                <Grip $h />
                <Stack $h={261}><Tools items={modifyTools} /></Stack>
                <Divider $h />
                <Grip $h />
                <Stack $h={62}><Tools items={orderTools} /></Stack>
              </SideBar>
              <SideBar>
                <Grip $h />
                {dimTools.map((group, i) => (
                  <React.Fragment key={i}>
                    {i > 0 && <Divider $h />}
                    <Stack $h={group.length * 15}><Tools items={group} /></Stack>
                  </React.Fragment>
                ))}
              </SideBar>
            </Work>
            <CommandDock>
              <Grip />
              <CommandBox>
                <CommandLine $log>
                  <CommandText>命令: 指定对角点:</CommandText>
                  <ScrollV><Arrow $dir="up" /><Arrow /></ScrollV>
                </CommandLine>
                <CommandLine>
                  <label htmlFor="command">命令:</label>
                  <CommandInput id="command" />
                  <ScrollH><Arrow $dir="left" /><Thumb /><Arrow $dir="right" /></ScrollH>
                </CommandLine>
              </CommandBox>
            </CommandDock>
          </Left>

          <Palette>
            <PaletteTop>
              <TinyButton aria-label="自动隐藏"><svg width="5" height="5"><path d="M1 2.500h3" stroke="#111" /></svg></TinyButton>
              <PaletteGrip />
              <TinyButton aria-label="关闭特性"><svg width="5" height="5"><path d="M0 0l5 5M5 0L0 5" stroke="#111" /></svg></TinyButton>
            </PaletteTop>
            <PalettePick>
              <ObjectSelect>
                <Pick $size={8} aria-label="对象类型" defaultValue="表格"><option>表格</option></Pick>
                <Arrow />
              </ObjectSelect>
              <BoxButton aria-label="切换 PICKADD"><Icon name="pickadd" size={12} /></BoxButton>
              <BoxButton aria-label="选择对象"><Icon name="selobj" size={12} /></BoxButton>
              <BoxButton aria-label="快速选择"><Icon name="filter" size={12} /></BoxButton>
            </PalettePick>
            <PaletteBody>
              <Sections>
                {sections.map((s) => (
                  <Section key={s.title}>
                    <SectionHead>{s.title}<Chevrons /></SectionHead>
                    {s.rows.length > 0 && (
                      <Grid><tbody>{s.rows.map((p) => <PropertyRow key={p.name} p={p} />)}</tbody></Grid>
                    )}
                  </Section>
                ))}
              </Sections>
              <ScrollTrack><Arrow $dir="up" /><ScrollThumb /><Arrow /></ScrollTrack>
            </PaletteBody>
          </Palette>
        </Main>

        <StatusBar>
          <Coords>2182.9389, 1455.4897, 0.0000</Coords>
          {toggles.map(([t, on]) => (
            <Toggle key={t} $on={on} $latin={/^[A-Z]/.test(t)} aria-pressed={on}>{t}</Toggle>
          ))}
        </StatusBar>

        <SideWidget />
        <Watermark>
          <CivilLogo />
          <WatermarkText>
            <SiteName>土木工程网</SiteName>
            <SiteLink href="#">www.civilcn.com</SiteLink>
          </WatermarkText>
        </Watermark>
      </Frame>
    </>
  );
}
